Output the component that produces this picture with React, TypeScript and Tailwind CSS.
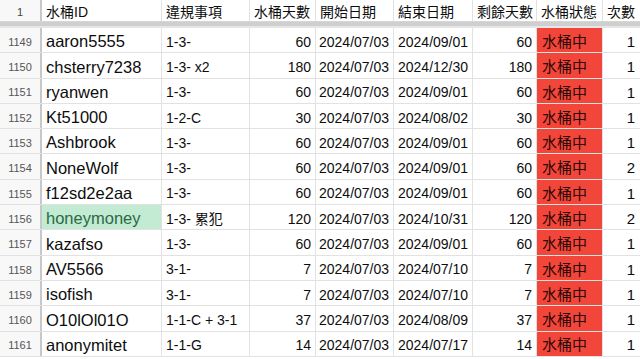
const COLS = ['w-[42px]', 'w-[120px]', 'w-[88px]', 'w-[66px]', 'w-[78px]', 'w-[79px]', 'w-[64px]', 'w-[66px]', 'w-[40px]']

const HEADERS = ['水桶ID', '違規事項', '水桶天數', '開始日期', '結束日期', '剩餘天數', '水桶狀態', '次數']

type Row = {
  n: number
  id: string
  rule: string
  days: number
  start: string
  end: string
  left: number
  count: number
  highlight?: boolean
}

const ROWS: Row[] = [
  { n: 1149, id: 'aaron5555', rule: '1-3-', days: 60, start: '2024/07/03', end: '2024/09/01', left: 60, count: 1 },
  { n: 1150, id: 'chsterry7238', rule: '1-3- x2', days: 180, start: '2024/07/03', end: '2024/12/30', left: 180, count: 1 },
  { n: 1151, id: 'ryanwen', rule: '1-3-', days: 60, start: '2024/07/03', end: '2024/09/01', left: 60, count: 1 },
  { n: 1152, id: 'Kt51000', rule: '1-2-C', days: 30, start: '2024/07/03', end: '2024/08/02', left: 30, count: 1 },
  { n: 1153, id: 'Ashbrook', rule: '1-3-', days: 60, start: '2024/07/03', end: '2024/09/01', left: 60, count: 1 },
  { n: 1154, id: 'NoneWolf', rule: '1-3-', days: 60, start: '2024/07/03', end: '2024/09/01', left: 60, count: 2 },
  { n: 1155, id: 'f12sd2e2aa', rule: '1-3-', days: 60, start: '2024/07/03', end: '2024/09/01', left: 60, count: 1 },
  { n: 1156, id: 'honeymoney', rule: '1-3- 累犯', days: 120, start: '2024/07/03', end: '2024/10/31', left: 120, count: 2, highlight: true },
  { n: 1157, id: 'kazafso', rule: '1-3-', days: 60, start: '2024/07/03', end: '2024/09/01', left: 60, count: 1 },
  { n: 1158, id: 'AV5566', rule: '3-1-', days: 7, start: '2024/07/03', end: '2024/07/10', left: 7, count: 1 },
  { n: 1159, id: 'isofish', rule: '3-1-', days: 7, start: '2024/07/03', end: '2024/07/10', left: 7, count: 1 },
  { n: 1160, id: 'O10lOl01O', rule: '1-1-C + 3-1', days: 37, start: '2024/07/03', end: '2024/08/09', left: 37, count: 1 },
  { n: 1161, id: 'anonymitet', rule: '1-1-G', days: 14, start: '2024/07/03', end: '2024/07/17', left: 14, count: 1 },
]

const cell = 'shrink-0 h-full flex items-center border-r border-[#e2e2e2] overflow-hidden whitespace-nowrap'

export default function App() {
  return (
    <div
      className="w-[640px] h-[359px] overflow-hidden bg-white text-[#0d0d0d] text-[14px]"
      style={{ fontFamily: '"Liberation Sans", "Noto Sans CJK TC", sans-serif' }}
    >
      <div className="flex h-[22px] border-b border-[#d6d6d6]">
        <div className={`${cell} ${COLS[0]} justify-center pt-[3px] text-[11px] text-[#444] border-r-2 border-r-[#c8c8c8] bg-[#f8f8f8]`}>1</div>
        {HEADERS.map((h, i) => (
          <div key={h} className={`${cell} ${COLS[i + 1]} px-[4px] pt-[4px]`}>
            {h}
          </div>
        ))}
      </div>
      <div className="h-[6px] bg-[#cfcfcf] border-b-2 border-[#e6e6e6]" />

      {ROWS.map((r) => (
        <div key={r.n} className="flex h-[25.3px] border-b border-[#e2e2e2]">
          <div className={`${cell} ${COLS[0]} justify-center pt-[4px] text-[11px] text-[#555] border-r-2 border-r-[#c8c8c8] bg-[#f8f8f8]`}>
            {r.n}
          </div>
          <div
            className={`${cell} ${COLS[1]} px-[4px] pt-[3px] text-[16.5px] ${
              r.highlight ? 'bg-[#c3ead3] text-[#2a6a45]' : ''
            }`}
          >
            {r.id}
          </div>
          <div className={`${cell} ${COLS[2]} px-[4px] pt-[4px]`}>{r.rule}</div>
          <div className={`${cell} ${COLS[3]} justify-end px-[4px] pt-[4px]`}>{r.days}</div>
          <div className={`${cell} ${COLS[4]} px-[3px] pt-[4px]`}>{r.start}</div>
          <div className={`${cell} ${COLS[5]} px-[4px] pt-[4px]`}>{r.end}</div>
          <div className={`${cell} ${COLS[6]} justify-end px-[4px] pt-[4px]`}>{r.left}</div>
          <div className={`${cell} ${COLS[7]} px-[5px] pt-[4px] text-[15px] bg-[#f3463b] text-[#2a0806] border-r-[#e2e2e2]`}>
            水桶中
          </div>
          <div className={`${cell} ${COLS[8]} justify-end pl-[4px] pr-[7px] pt-[4px] text-[15px]`}>{r.count}</div>
        </div>
      ))}
    </div>
  )
}
